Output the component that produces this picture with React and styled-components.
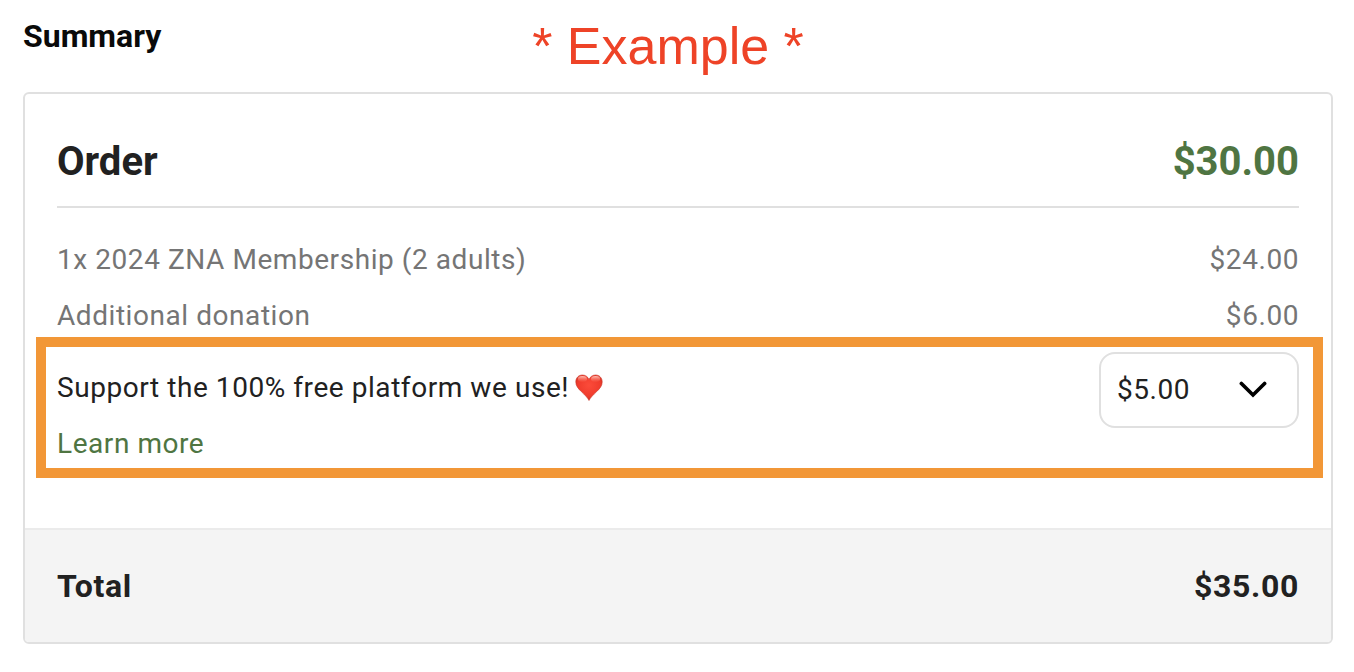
import React, { useState } from "react";
import styled, { createGlobalStyle } from "styled-components";

//CSS
const GlobalStyle = createGlobalStyle`
  * {
    box-sizing: border-box;
  }

  body {
    margin: 0;
    background: #ffffff;
    color: #212121;
    font-family: Roboto, "Liberation Sans", sans-serif;
    font-size: 28px;
    line-height: 56px;
  }
`;

const Page = styled.main`
  padding: 0 21px 28px 23px;
`;

const TopBar = styled.header`
  display: grid;
  grid-template-columns: 1fr auto 1fr;
  align-items: center;
  height: 92px;
  padding-right: 20px;
`;

const Heading = styled.h1`
  margin: 0 0 20px;
  color: #0a0a0a;
  font-size: 32px;
  font-weight: 700;
  line-height: 40px;
`;

const Note = styled.p`
  margin: 0;
  color: #ee4327;
  font-family: "Liberation Sans", Arial, sans-serif;
  font-size: 52px;
  line-height: 60px;
`;

const Card = styled.section`
  border: 2px solid #e0e0e0;
  border-radius: 6px;
  overflow: hidden;
`;

const CardBody = styled.div`
  padding: 40px 32px 56px;
`;

const Row = styled.div`
  display: flex;
  justify-content: space-between;
  letter-spacing: 0.02em;
  color: ${({ $muted }) => ($muted ? "#757575" : "#212121")};
`;

const OrderHeader = styled.div`
  display: flex;
  justify-content: space-between;
  margin-bottom: 24px;
  padding-bottom: 16px;
  border-bottom: 2px solid #e0e0e0;
  font-size: 40px;
  font-weight: 700;
`;

const OrderTitle = styled.h2`
  margin: 0;
  font: inherit;
`;

const OrderAmount = styled.span`
  color: #4f7542;
`;

const SupportRow = styled(Row)`
  position: relative;
  align-items: flex-start;
  margin-top: 8px;

  /* highlight frame drawn over the row */
  &::after {
    content: "";
    position: absolute;
    inset: -15px -24px -6px -21px;
    border: 10px solid #f29737;
    pointer-events: none;
  }
`;

const SupportText = styled.div`
  padding-top: 8px;
`;

const SupportLabel = styled.label`
  display: flex;
  align-items: center;
  gap: 6px;
`;

const LearnMore = styled.a`
  display: block;
  color: #4f7542;
  text-decoration: none;
`;

const SelectBox = styled.div`
  position: relative;
  width: 200px;
`;

const Select = styled.select`
  display: block;
  width: 100%;
  height: 76px;
  padding: 0 16px;
  border: 2px solid #e0e0e0;
  border-radius: 16px;
  appearance: none;
  background: #ffffff;
  color: #212121;
  font: inherit;
  letter-spacing: inherit;
`;

const Chevron = styled.svg`
  position: absolute;
  top: 28px;
  right: 30px;
  pointer-events: none;
`;

const TotalRow = styled(Row)`
  padding: 28px 32px;
  border-top: 2px solid #ebebeb;
  background: #f4f4f4;
  font-size: 32px;
  font-weight: 700;
`;

const items = [
  { label: "1x 2024 ZNA Membership (2 adults)", price: "$24.00" },
  { label: "Additional donation", price: "$6.00" },
];

const Heart = () => (
  <svg width="28" height="28" viewBox="0 0 28 28" aria-hidden="true">
    <defs>
      <radialGradient id="heartFill" cx="50%" cy="40%" r="60%">
        <stop offset="0" stopColor="#fb4b3a" />
        <stop offset="0.7" stopColor="#f03c2d" />
        <stop offset="1" stopColor="#cf3225" />
      </radialGradient>
      <linearGradient id="heartShine" x1="0" y1="0" x2="0" y2="1">
        <stop offset="0" stopColor="#ffd2c8" stopOpacity="0.9" />
        <stop offset="1" stopColor="#ff7a66" stopOpacity="0.1" />
      </linearGradient>
    </defs>
    <path
      d="M14 26.5C12.6 23.6 9.4 20.6 6.3 17.6C3 14.4 0.8 11.8 0.8 7.9C0.8 3.8 3.7 1 7.3 1C10.4 1 12.8 2.7 14 5.4C15.2 2.7 17.6 1 20.7 1C24.3 1 27.2 3.8 27.2 7.9C27.2 11.8 25 14.4 21.7 17.6C18.6 20.6 15.4 23.6 14 26.5Z"
      fill="url(#heartFill)"
      stroke="#c93426"
      strokeWidth="0.6"
    />
    <ellipse cx="7.4" cy="4.9" rx="4.6" ry="3" fill="url(#heartShine)" />
    <ellipse cx="20.6" cy="4.9" rx="4.6" ry="3" fill="url(#heartShine)" />
  </svg>
);

const App = () => {
  const [support, setSupport] = useState("$5.00");

  return (
    <Page>
      <GlobalStyle />
      <TopBar>
        <Heading>Summary</Heading>
        <Note>* Example *</Note>
      </TopBar>
      <Card>
        <CardBody>
          <OrderHeader>
            <OrderTitle>Order</OrderTitle>
            <OrderAmount>$30.00</OrderAmount>
          </OrderHeader>
          {items.map((item) => (
            <Row key={item.label} $muted>
              <span>{item.label}</span>
              <span>{item.price}</span>
            </Row>
          ))}
          <SupportRow>
            <SupportText>
              <SupportLabel htmlFor="support">
                Support the 100% free platform we use!
                <Heart />
              </SupportLabel>
              <LearnMore href="#learn-more">Learn more</LearnMore>
            </SupportText>
            <SelectBox>
              <Select
                id="support"
                value={support}
                onChange={(e) => setSupport(e.target.value)}
              >
                <option>$5.00</option>
              </Select>
              <Chevron width="30" height="20" viewBox="0 0 30 20" aria-hidden="true">
                <path
                  d="M2.4 3.5L14 15L25.6 3.5"
                  fill="none"
                  stroke="#000000"
                  strokeWidth="3.7"
                  strokeLinecap="round"
                />
              </Chevron>
            </SelectBox>
          </SupportRow>
        </CardBody>
        <TotalRow>
          <span>Total</span>
          <span>$35.00</span>
        </TotalRow>
      </Card>
    </Page>
  );
};

export default App;
